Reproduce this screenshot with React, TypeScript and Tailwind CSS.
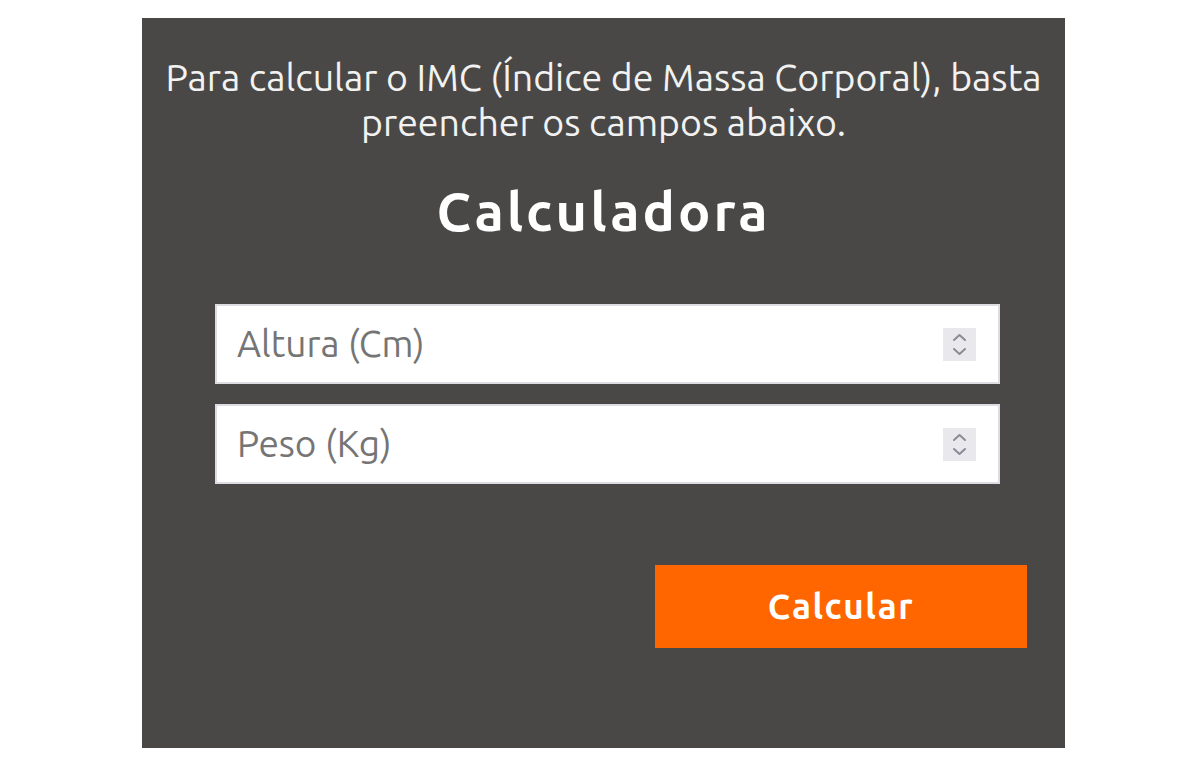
import React from "react";

function Spinner() {
  return (
    <div className="flex h-[33px] w-[33px] items-center justify-center bg-[#e8e8ed]">
      <svg width="33" height="33" viewBox="0 0 33 33" fill="none" stroke="#8a8a98" strokeWidth="2" strokeLinecap="round" strokeLinejoin="round">
        <path d="M11 12 L16.5 7 L22 12" />
        <path d="M11 21 L16.5 26 L22 21" />
      </svg>
    </div>
  );
}

function Field({ placeholder }: { placeholder: string }) {
  return (
    <div className="flex h-[80px] w-[785px] items-center border-2 border-[#dcdce2] bg-white pl-[20px] pr-[22px]">
      <input
        type="text"
        placeholder={placeholder}
        className="min-w-0 flex-1 bg-transparent text-[37px] text-[#555] outline-none placeholder:text-[#757575]"
        style={{ fontFamily: "Ubuntu, 'Open Sans', sans-serif" }}
      />
      <Spinner />
    </div>
  );
}

export default function App() {
  return (
    <div className="min-h-[768px] w-full bg-white pt-[18px]" style={{ fontFamily: "Ubuntu, 'Open Sans', sans-serif" }}>
      <div className="ml-[142px] flex h-[730px] w-[923px] flex-col bg-[#4a4846]">
        <p className="mt-[37px] text-center text-[37.5px] leading-[45px] text-[#f2f2f2]">
          Para calcular o IMC (Índice de Massa Corporal), basta
          <br />
          preencher os campos abaixo.
        </p>
        <h1 className="mt-[36px] text-center text-[54px] font-bold leading-[60px] tracking-[3px] text-white">Calculadora</h1>
        <div className="mt-[63px] flex flex-col gap-[20px] pl-[73px]">
          <Field placeholder="Altura (Cm)" />
          <Field placeholder="Peso (Kg)" />
        </div>
        <div className="mt-[81px] flex justify-end pr-[38px]">
          <button className="flex h-[83px] w-[372px] items-center justify-center bg-[#ff6600] text-[35px] font-bold tracking-[1.5px] text-white">
            Calcular
          </button>
        </div>
      </div>
    </div>
  );
}
